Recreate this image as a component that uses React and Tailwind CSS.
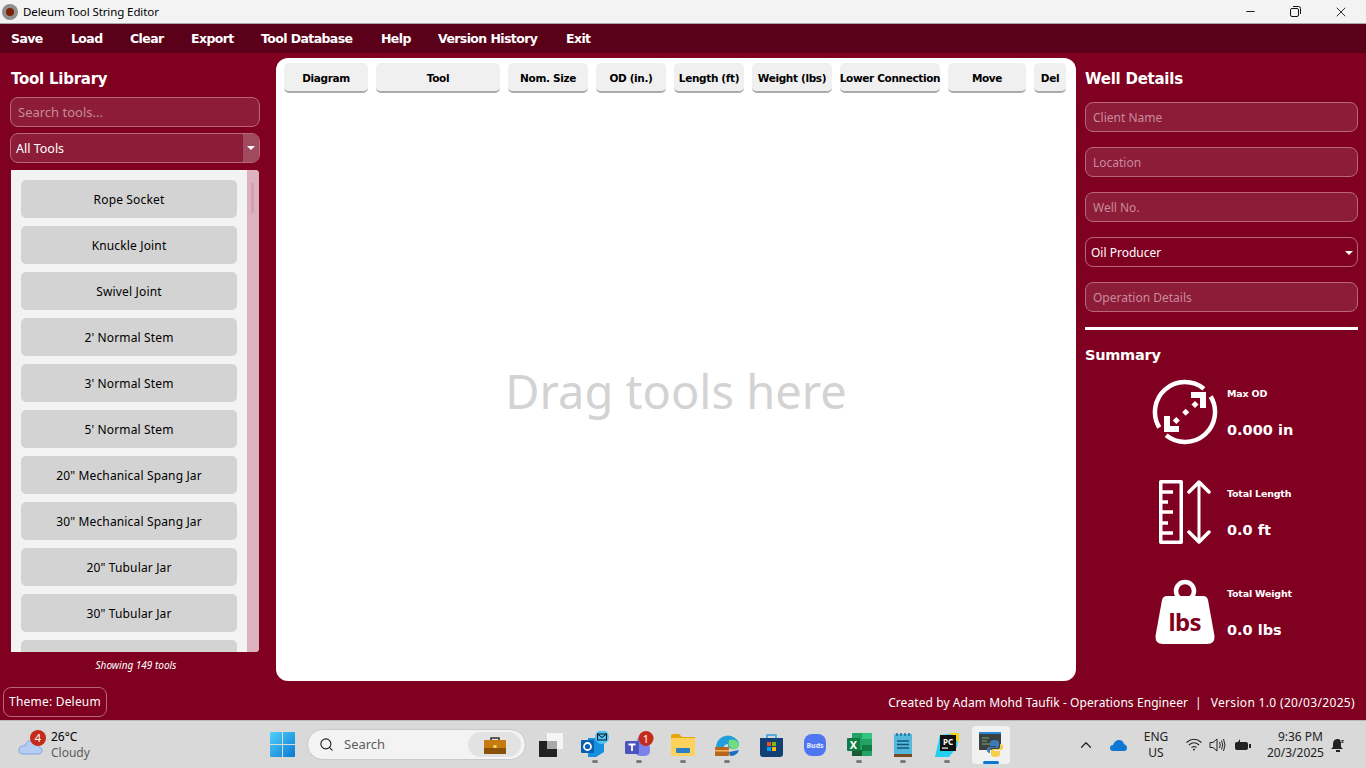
import { ChevronUp, Minus, Search, X } from 'lucide-react'

const menuItems = [
  { label: 'Save', w: 'w-[60px]' },
  { label: 'Load', w: 'w-[59px]' },
  { label: 'Clear', w: 'w-[61px]' },
  { label: 'Export', w: 'w-[70px]' },
  { label: 'Tool Database', w: 'w-[120px]' },
  { label: 'Help', w: 'w-[57px]' },
  { label: 'Version History', w: 'w-[128px]' },
  { label: 'Exit', w: 'w-[50px]' },
]

const columns = [
  { label: 'Diagram', w: 'w-[84px]' },
  { label: 'Tool', w: 'w-[124px]' },
  { label: 'Nom. Size', w: 'w-[80px]' },
  { label: 'OD (in.)', w: 'w-[70px]' },
  { label: 'Length (ft)', w: 'w-[70px]' },
  { label: 'Weight (lbs)', w: 'w-[80px]' },
  { label: 'Lower Connection', w: 'w-[100px]' },
  { label: 'Move', w: 'w-[78px]' },
  { label: 'Del', w: 'w-[32px]' },
]

const tools = [
  'Rope Socket',
  'Knuckle Joint',
  'Swivel Joint',
  "2' Normal Stem",
  "3' Normal Stem",
  "5' Normal Stem",
  '20" Mechanical Spang Jar',
  '30" Mechanical Spang Jar',
  '20" Tubular Jar',
  '30" Tubular Jar',
  '',
]

const inputClass =
  'h-[30px] w-full rounded-[8px] border border-[#b9667c] bg-[#8c1c38] px-[7px] text-[12px] text-white outline-none placeholder:text-[#c98a9b]'

function Caret() {
  return <span className="h-0 w-0 border-x-[4px] border-t-[4px] border-x-transparent border-t-white" />
}

function MaxOdIcon() {
  return (
    <svg width="66" height="66" viewBox="0 0 66 66" fill="none" stroke="#fff">
      <path d="M7.300 48.500 A30 30 0 0 1 51.900 9.700" strokeWidth="4.500" />
      <path d="M58.700 17.500 A30 30 0 0 1 14.100 56.300" strokeWidth="4.500" />
      <path d="M39 16 H51 V29" strokeWidth="6" />
      <path d="M27 50 H15 V37" strokeWidth="6" />
      <g fill="#fff" stroke="none">
        <rect x="21.800" y="39" width="5" height="5" transform="rotate(45 24.300 41.500)" />
        <rect x="31.200" y="30.800" width="5" height="5" transform="rotate(45 33.700 33.300)" />
        <rect x="40.500" y="23" width="5" height="5" transform="rotate(45 43 25.500)" />
      </g>
    </svg>
  )
}

function LengthIcon() {
  return (
    <svg width="53" height="66" viewBox="0 0 53 66" fill="none" stroke="#fff">
      <path d="M1.750 2.750 H22.250 V63.250 H1.750 Z" strokeWidth="3.500" strokeLinejoin="round" />
      <path d="M2 13 H14 M2 23 H9 M2 33 H14 M2 44 H9 M2 54 H14" strokeWidth="3.500" />
      <path d="M40 3 V63" strokeWidth="3" />
      <path d="M30 13 L40 3 L50 13 M30 53 L40 63 L50 53" strokeWidth="3.500" strokeLinecap="round" strokeLinejoin="round" />
    </svg>
  )
}

function WeightIcon() {
  return (
    <svg width="60" height="66" viewBox="0 0 60 66">
      <circle cx="30" cy="12" r="9" fill="none" stroke="#fff" strokeWidth="4.500" />
      <path d="M12 17 H48 Q52 17 53 21 L59.500 57 Q60 65 52 65 H8 Q0 65 .5 57 L7 21 Q8 17 12 17 Z" fill="#fff" />
      <text x="30" y="52" textAnchor="middle" fontFamily="'Noto Sans', sans-serif" fontWeight="700" fontSize="24" fill="#7f0020" textLength="33">lbs</text>
    </svg>
  )
}

function SummaryRow({ icon, label, value, iconBox }) {
  return (
    <div className="flex h-[66px] items-center">
      <div className={`flex h-[66px] w-[134px] shrink-0 items-center justify-end ${iconBox}`}>{icon}</div>
      <div className="ml-[8px] flex h-[66px] flex-col justify-between pb-[3px] pt-[8px] font-['DejaVu_Sans'] font-bold text-white">
        <div className="text-[9.5px] leading-[14px] tracking-[-0.2px]">{label}</div>
        <div className="text-[14.5px] leading-[24px]">{value}</div>
      </div>
    </div>
  )
}

function WindowsLogo() {
  return (
    <svg width="25" height="25" viewBox="0 0 25 25">
      <defs>
        <linearGradient id="win" x1="0" y1="0" x2="1" y2="1">
          <stop offset="0" stopColor="#4fd2fb" />
          <stop offset="1" stopColor="#0a78d4" />
        </linearGradient>
      </defs>
      <path d="M1 0 H12 V12 H0 V1 Q0 0 1 0 Z M13 0 H24 Q25 0 25 1 V12 H13 Z M0 13 H12 V25 H1 Q0 25 0 24 Z M13 13 H25 V24 Q25 25 24 25 H13 Z" fill="url(#win)" />
    </svg>
  )
}

function TaskIcon({ children, running, active }) {
  return (
    <div className="relative flex h-[38px] w-[44px] items-center justify-center">
      {active && <div className="absolute left-[3px] top-0 h-[38px] w-[38px] rounded-[4px] bg-[#f1f1f1]" />}
      <div className="relative">{children}</div>
      {running && !active && <div className="absolute bottom-[1px] left-[19px] h-[3px] w-[6px] rounded-full bg-[#7a7a7a]" />}
      {active && <div className="absolute bottom-0 left-[14px] h-[3px] w-[16px] rounded-full bg-[#0a78d4]" />}
    </div>
  )
}

export default function App() {
  return (
    <div className="flex h-[768px] w-[1366px] flex-col overflow-hidden bg-[#7f0020] font-['Noto_Sans',sans-serif]">
      {/* Title bar */}
      <div className="flex h-[24px] shrink-0 items-center border-b border-[#a9a9a9] bg-[#f3f3f3] text-[11.5px] text-black">
        <div className="ml-[2px] flex h-[16px] w-[16px] items-center justify-center rounded-full bg-[#8f8f8f]">
          <div className="h-[8px] w-[8px] rounded-full bg-[#7c2208]" />
        </div>
        <span className="ml-[5px] tracking-[-0.1px]">Deleum Tool String Editor</span>
        <div className="ml-auto flex items-center">
          <div className="flex w-[46px] justify-center"><Minus size={13} strokeWidth={1.6} /></div>
          <div className="flex w-[46px] justify-center pr-[2px]">
            <svg width="11" height="11" viewBox="0 0 11 11" fill="none" stroke="#111">
              <rect x="0.5" y="2.500" width="8" height="8" rx="1.500" />
              <path d="M3 .5 H8.500 Q10.500 .5 10.500 2.500 V8" />
            </svg>
          </div>
          <div className="flex w-[47px] justify-center pr-[4px]"><X size={16} strokeWidth={1.2} /></div>
        </div>
      </div>

      {/* Menu */}
      <div className="flex h-[29px] shrink-0 items-center bg-[#5a0019] pl-[11px] pt-[2px] font-['DejaVu_Sans'] text-[12.5px] font-bold tracking-[-0.6px] text-white">
        {menuItems.map(item => (
          <div key={item.label} className={`${item.w} shrink-0`}>{item.label}</div>
        ))}
      </div>

      {/* Main area */}
      <div className="flex h-[667px] shrink-0 flex-col">
        <div className="flex h-[628px] shrink-0 pt-[5px]">
          {/* Tool library */}
          <div className="w-[276px] shrink-0 pl-[10px]">
            <h2 className="ml-[1px] mt-[8px] h-[26px] font-['DejaVu_Sans'] text-[15px] leading-[26px] font-bold tracking-[-0.25px] text-white">Tool Library</h2>
            <input className={`${inputClass} mt-[5px] !w-[250px] block !text-[13px]`} placeholder="Search tools..." readOnly />
            <div className="mt-[6px] flex h-[30px] w-[250px] items-stretch overflow-hidden rounded-[8px] border border-[#b9667c] bg-[#8c1c38] text-[12.500px] text-white">
              <span className="flex-1 pl-[5px] leading-[29px]">All Tools</span>
              <span className="flex w-[16px] items-center justify-center bg-[#a04a5f]"><Caret /></span>
            </div>
            <div className="ml-[1px] mt-[7px] flex h-[482px] w-[248px] overflow-hidden rounded-r-[4px] bg-[#f3f3f3]">
              <div className="flex w-[236px] shrink-0 flex-col gap-[8px] pl-[10px] pt-[10px]">
                {tools.map((tool, i) => (
                  <div key={i} className="flex h-[38px] w-[216px] shrink-0 items-center justify-center rounded-[5px] bg-[#d3d3d3] pt-[2px] text-[12px] tracking-[0.15px] text-black">
                    {tool}
                  </div>
                ))}
              </div>
              <div className="w-[12px] shrink-0 bg-[#dcb2bf] pl-[4px] pt-[12px]">
                <div className="h-[31px] w-[3px] rounded-full bg-[#cfa2b0]" />
              </div>
            </div>
            <p className="mt-[6px] w-[250px] pl-[2px] text-center text-[10px] leading-[15px] text-white italic">Showing 149 tools</p>
          </div>

          {/* Tool string table */}
          <div className="flex h-[623px] w-[800px] shrink-0 flex-col rounded-[12px] bg-white">
            <div className="flex gap-[8px] pl-[8px] pt-[5px]">
              {columns.map(col => (
                <div key={col.label} className={`${col.w} flex h-[30px] shrink-0 items-center justify-center whitespace-nowrap rounded-[5px] border-b-2 border-[#aaaaaa] bg-[#f0f0f0] pt-[4px] font-['DejaVu_Sans'] text-[10.5px] font-bold tracking-[-0.35px] text-black`}>
                  {col.label}
                </div>
              ))}
            </div>
            <div className="flex flex-1 items-center justify-center pt-[8px] text-[47px] text-[#d3d3d3]">Drag tools here</div>
          </div>

          {/* Well details */}
          <div className="ml-[9px] w-[273px] shrink-0">
            <h2 className="mt-[8px] h-[26px] font-['DejaVu_Sans'] text-[15px] leading-[26px] font-bold tracking-[-0.25px] text-white">Well Details</h2>
            <div className="mt-[10px] flex flex-col gap-[15px]">
              <input className={inputClass} placeholder="Client Name" readOnly />
              <input className={inputClass} placeholder="Location" readOnly />
              <input className={inputClass} placeholder="Well No." readOnly />
              <div className="flex h-[30px] items-center justify-between rounded-[8px] border border-[#b9667c] pl-[5px] pr-[4px] pt-[1px] text-[12px] text-white">
                <span>Oil Producer</span>
                <Caret />
              </div>
              <input className={inputClass} placeholder="Operation Details" readOnly />
            </div>
            <div className="mt-[15px] h-[3px] bg-white" />
            <h3 className="mt-[15px] h-[20px] font-['DejaVu_Sans'] text-[14.500px] leading-[20px] font-bold tracking-[-0.25px] text-white">Summary</h3>
            <div className="mt-[14px] flex flex-col gap-[34px]">
              <SummaryRow icon={<MaxOdIcon />} label="Max OD" value="0.000 in" iconBox="pr-[1px]" />
              <SummaryRow icon={<LengthIcon />} label="Total Length" value="0.0 ft" iconBox="pr-[7px]" />
              <SummaryRow icon={<WeightIcon />} label="Total Weight" value="0.0 lbs" iconBox="pr-[4px]" />
            </div>
          </div>
        </div>

        {/* Footer */}
        <div className="flex h-[39px] items-center justify-between pl-[3px] pr-[11px] pt-[2px] text-[12px] text-white">
          <div className="flex h-[30px] w-[104px] items-center justify-center rounded-[8px] border border-[#b9667c] tracking-[0.2px]">Theme: Deleum</div>
          <div className="flex pt-[2px]">
            <span className="tracking-[0.08px]">Created by Adam Mohd Taufik - Operations Engineer</span>
            <span className="ml-[7px] mr-[9px]">|</span>
            <span className="tracking-[0.33px]">Version 1.0 (20/03/2025)</span>
          </div>
        </div>
      </div>

      {/* Windows taskbar */}
      <div className="flex h-[48px] shrink-0 items-center border-t border-[#b8b8b8] bg-[#d9d9d9] text-black">
        <div className="flex w-[270px] shrink-0 items-center pl-[18px]">
          <div className="relative h-[26px] w-[33px]">
            <svg className="absolute left-0 top-[4px]" width="26" height="20" viewBox="0 0 26 20">
              <path d="M6 18 Q0 18 1 13 Q2 9 7 10 Q9 3 16 5 Q21 6 21 11 Q25 12 24 16 Q23 18 20 18 Z" fill="#b5cdf2" stroke="#7ea6e6" />
            </svg>
            <div className="absolute left-[12px] top-[-2px] flex h-[16px] w-[16px] items-center justify-center rounded-full bg-[#c42b1c] text-[11px] leading-none text-white">4</div>
          </div>
          <div className="text-[12px] leading-[16px]">
            <div>26°C</div>
            <div className="text-[#5c5c5c]">Cloudy</div>
          </div>
        </div>
        <WindowsLogo />
        <div className="ml-[12px] flex h-[31px] w-[219px] shrink-0 items-center rounded-full border border-[#c9c9c9] bg-[#f3f3f3] pl-[11px] pr-[4px]">
          <Search size={15} strokeWidth={1.8} className="text-[#222]" />
          <span className="ml-[10px] text-[13px] text-[#5c5c5c]">Search</span>
          <div className="ml-auto flex h-[25px] w-[53px] items-center justify-center rounded-full bg-[#e2e2e2]">
            <svg width="22" height="18" viewBox="0 0 22 18">
              <path d="M7 4 V2 H15 V4" fill="none" stroke="#333" strokeWidth="1.5" />
              <rect y="4" width="22" height="14" rx="1" fill="#c77a10" />
              <rect y="12" width="22" height="6" fill="#8a5208" />
              <rect x="9.500" y="9" width="3" height="3" fill="#fbd75b" />
            </svg>
          </div>
        </div>
        <div className="ml-[3px] flex shrink-0 items-center">
          <TaskIcon>
            <svg width="24" height="24" viewBox="0 0 24 24">
              <rect x="8" y="0" width="16" height="16" fill="#f5f5f5" />
              <rect x="0" y="8" width="18" height="16" fill="#222" />
              <rect x="8" y="8" width="10" height="8" fill="#a9a9a9" />
            </svg>
          </TaskIcon>
          <TaskIcon running>
            <svg width="30" height="28" viewBox="0 0 30 28">
              <path d="M8 7 H24 V21 L16 26 H8 Z" fill="#1490df" />
              <rect x="1" y="9" width="13" height="13" rx="1" fill="#0a5fb0" />
              <circle cx="7.500" cy="15.500" r="3.500" fill="none" stroke="#fff" strokeWidth="1.8" />
              <circle cx="22" cy="6" r="7" fill="#4fc3f7" />
              <rect x="17.500" y="3" width="9" height="6" fill="none" stroke="#111" />
              <path d="M17.500 3 L22 6.500 L26.500 3" fill="none" stroke="#111" />
            </svg>
          </TaskIcon>
          <TaskIcon running>
            <svg width="30" height="28" viewBox="0 0 30 28">
              <circle cx="17" cy="10" r="4" fill="#7b83eb" />
              <rect x="11" y="12" width="15" height="13" rx="5" fill="#7b83eb" />
              <rect x="1" y="10" width="14" height="13" rx="1.500" fill="#4b53bc" />
              <path d="M4.500 13.500 H11.500 M8 13.500 V20" stroke="#fff" strokeWidth="1.800" />
              <circle cx="22" cy="7.500" r="7.500" fill="#c42b1c" />
              <text x="22" y="11.500" textAnchor="middle" fontSize="11" fontFamily="'Noto Sans', sans-serif" fill="#fff">1</text>
            </svg>
          </TaskIcon>
          <TaskIcon running>
            <svg width="24" height="22" viewBox="0 0 24 22">
              <path d="M0 2 Q0 0 2 0 H8 L11 3 H24 V20 Q24 22 22 22 H2 Q0 22 0 20 Z" fill="#e8a400" />
              <rect y="4" width="24" height="18" rx="1" fill="#fbd35c" />
              <rect x="5" y="14" width="14" height="5" rx="1" fill="#2a7fc7" />
            </svg>
          </TaskIcon>
          <TaskIcon running>
            <svg width="25" height="25" viewBox="0 0 25 25">
              <path d="M1 14 A12 12 0 0 1 24 11 Q24 18 17 17 Q12 16 13 12 Q8 12 8 19 L1 19 Z" fill="#1fa0dc" />
              <path d="M14 8 Q21 6 24 12 Q24 18 17 17 Q12 14 14 8 Z" fill="#6fdc7f" />
              <path d="M15 24 Q22 24 24 18 L14 20 Z" fill="#1b6fc2" />
              <rect x="0" y="15" width="14" height="9" rx="1" fill="#b8661a" />
              <rect x="0" y="18" width="14" height="1.500" fill="#f4b45c" />
            </svg>
          </TaskIcon>
          <TaskIcon>
            <svg width="23" height="24" viewBox="0 0 23 24">
              <path d="M7 5 V2 H16 V5" fill="none" stroke="#29a3dc" strokeWidth="1.500" />
              <path d="M0 5 H23 V21 Q23 24 20 24 H3 Q0 24 0 21 Z" fill="#123f74" />
              <rect x="7" y="9" width="4" height="4" fill="#f25022" />
              <rect x="12" y="9" width="4" height="4" fill="#7fba00" />
              <rect x="7" y="14" width="4" height="4" fill="#00a4ef" />
              <rect x="12" y="14" width="4" height="4" fill="#ffb900" />
            </svg>
          </TaskIcon>
          <TaskIcon>
            <svg width="22" height="22" viewBox="0 0 22 22">
              <rect width="22" height="22" rx="8" fill="#4f75f0" />
              <text x="11" y="14" textAnchor="middle" fontSize="7" fontWeight="700" fontFamily="'Noto Sans', sans-serif" fill="#e8ecff">Buds</text>
            </svg>
          </TaskIcon>
          <TaskIcon running>
            <svg width="25" height="23" viewBox="0 0 25 23">
              <rect x="5" y="0" width="20" height="23" rx="1" fill="#21a366" />
              <rect x="15" y="0" width="10" height="6" fill="#33c481" />
              <rect x="15" y="12" width="10" height="6" fill="#107c41" />
              <rect x="5" y="17" width="10" height="6" fill="#185c37" />
              <rect x="0" y="5" width="13" height="13" rx="1" fill="#107c41" />
              <text x="6.500" y="15.500" textAnchor="middle" fontSize="11" fontWeight="700" fontFamily="'Noto Sans', sans-serif" fill="#fff">X</text>
            </svg>
          </TaskIcon>
          <TaskIcon running>
            <svg width="18" height="24" viewBox="0 0 18 24">
              <rect y="1" width="18" height="20" fill="#54b8dc" />
              <rect y="21" width="18" height="3" fill="#7a4a20" />
              <path d="M3 0 V3 M7 0 V3 M11 0 V3 M15 0 V3" stroke="#1a6f96" strokeWidth="1.500" />
              <path d="M3 8 H15 M3 11.500 H15 M3 15 H15" stroke="#12577a" strokeWidth="1.500" />
            </svg>
          </TaskIcon>
          <TaskIcon running>
            <svg width="24" height="24" viewBox="0 0 24 24">
              <path d="M5 2 L24 0 L22 14 L14 24 H0 Z" fill="#21d0f0" />
              <path d="M14 0 H24 V10 Z" fill="#f3d51f" />
              <rect x="5" y="2" width="16" height="16" fill="#111" />
              <text x="13" y="12" textAnchor="middle" fontSize="8" fontWeight="700" fontFamily="'Noto Sans', sans-serif" fill="#fff">PC</text>
              <rect x="7" y="14.500" width="6" height="1.200" fill="#fff" />
            </svg>
          </TaskIcon>
          <TaskIcon active>
            <svg width="24" height="25" viewBox="0 0 24 25">
              <rect width="22" height="18" fill="#3c4043" />
              <rect width="22" height="2" fill="#2b88d8" />
              <path d="M3 6 H10 M3 9 H8 M3 12 H11" stroke="#6fae6f" strokeWidth="1" />
              <path d="M16 8 Q11 8 11 11 V14 H17 V15 H10 Q8 15 8 18 Q8 21 11 21 V18 Q11 16 14 16 H18 Q20 16 20 14 V11 Q20 8 16 8 Z" fill="#3b7cb8" />
              <path d="M16 25 Q21 25 21 22 V19 H15 V18 H22 Q24 18 24 15 Q24 12 21 12 V15 Q21 17 18 17 H14 Q12 17 12 19 V22 Q12 25 16 25 Z" fill="#f5cf47" />
            </svg>
          </TaskIcon>
        </div>

        {/* Tray */}
        <div className="ml-auto flex items-center">
          <ChevronUp size={18} strokeWidth={1.600} className="text-[#222]" />
          <svg className="ml-[15px]" width="17" height="12" viewBox="0 0 17 12">
            <path d="M3 12 Q0 12 0 9 Q0 6 3 6 Q5 1 9 1 Q13 1 14 5 Q17 6 17 9 Q17 12 14 12 Z" fill="#0f78d4" />
          </svg>
          <div className="ml-[16px] w-[26px] text-center text-[12px] leading-[16px] text-[#222]">
            <div>ENG</div>
            <div>US</div>
          </div>
          <svg className="ml-[17px]" width="16" height="13" viewBox="0 0 16 13" fill="none" stroke="#222" strokeWidth="1.100">
            <path d="M.5 4.500 Q8 -2 15.500 4.500 M3 7 Q8 2.500 13 7 M5.500 9.500 Q8 7.500 10.500 9.500" />
            <circle cx="8" cy="11.500" r="1" fill="#222" stroke="none" />
          </svg>
          <svg className="ml-[7px]" width="17" height="14" viewBox="0 0 17 14" fill="none" stroke="#222" strokeWidth="1">
            <path d="M1 4.500 H4 L8 1 V13 L4 9.500 H1 Z" />
            <path d="M10.500 4 Q12 7 10.500 10 M12.500 2.500 Q15 7 12.500 11.500 M14.500 1 Q17.500 7 14.500 13" />
          </svg>
          <svg className="ml-[8px]" width="17" height="12" viewBox="0 0 17 12">
            <rect x="1.500" y="3.500" width="12" height="7" rx="1" fill="#222" stroke="#222" />
            <rect x="15" y="5" width="2" height="4" fill="#222" />
            <path d="M4 3 L6 0 L6 3 Z" fill="#222" />
          </svg>
          <div className="ml-[16px] w-[56px] text-right text-[12px] leading-[16px] text-[#222]">
            <div>9:36 PM</div>
            <div>20/3/2025</div>
          </div>
          <svg className="ml-[8px] mr-[21px]" width="14" height="16" viewBox="0 0 14 16">
            <path d="M7 2 Q2 2 2 7 V10 L0 12 H12 L10 10 V7 Q10 2 7 2 Z" fill="#222" />
            <rect x="5" y="13" width="4" height="2" fill="#222" />
            <text x="10" y="6" fontSize="6" fontWeight="700" fontFamily="'Noto Sans', sans-serif" fill="#222">z</text>
          </svg>
        </div>
      </div>
    </div>
  )
}
